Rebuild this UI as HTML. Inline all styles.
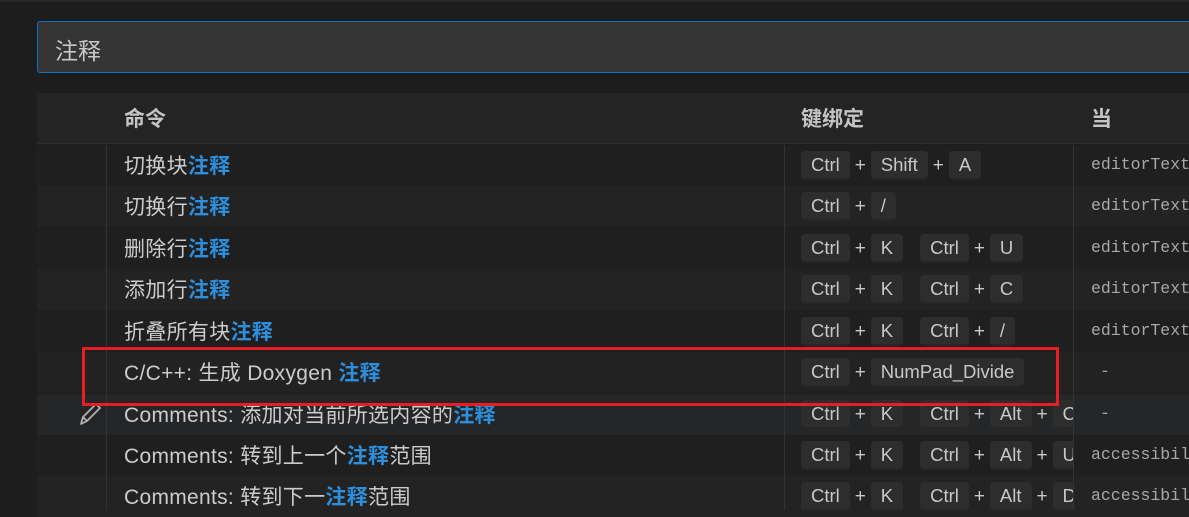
<!DOCTYPE html>
<html><head><meta charset="utf-8"><style>
*{margin:0;padding:0;box-sizing:border-box}
body{width:1189px;height:510px;overflow:hidden;background:#1d1d1d;position:relative;font-family:"Liberation Sans","Noto Sans CJK SC",sans-serif;color:#cccccc}
.topbar{position:absolute;top:0;left:0;width:1189px;height:2px;background:#262626}
.search{position:absolute;left:37px;top:21px;width:1160px;height:52px;background:#353535;border:1px solid #0a74c4;border-radius:3px;font-size:23px;color:#c8c8c8;padding:10px 0 0 17px}
.head{position:absolute;left:37px;top:93px;width:1152px;height:51px;background:#242424;border-bottom:1px solid #303030;font-weight:bold;font-size:21px;color:#c4c4c4}
.head span{position:absolute;top:10px}
.row{position:absolute;left:37px;width:1152px;height:41px;font-size:21px;overflow:hidden}
.row .c{position:absolute;left:87px;top:5px;white-space:nowrap;letter-spacing:0.3px}
.row .k{position:absolute;left:764px;top:6px;display:flex;align-items:center;white-space:nowrap;width:272px;overflow:hidden}
.row .w{position:absolute;left:1054px;top:10px;font-family:"Liberation Mono","DejaVu Sans Mono",monospace;font-size:16.5px;color:#a8a8a8;white-space:nowrap}
.kb{flex-shrink:0;display:inline-block;height:29px;line-height:27px;padding:0 10px;background:#2d2d2d;border-radius:4px;border-bottom:2px solid #262626;font-size:18.5px;color:#c8c8c8}
.p{flex-shrink:0;display:inline-block;width:21px;text-align:center;font-size:19px;color:#c8c8c8}
.g{flex-shrink:0;display:inline-block;width:17px}
b{color:#2d8fdc}
.vl{position:absolute;top:145px;width:1px;height:365px;background:#333}
.red{position:absolute;left:82px;top:347px;width:977px;height:59px;border:3px solid #e81e24}
</style></head><body>
<div class="topbar"></div>
<div class="search">注释</div>
<div class="head"><span style="left:87px">命令</span><span style="left:764px">键绑定</span><span style="left:1054px">当</span></div>

<div class="row" style="top:145px;background:#1f1f1f"><div class="c">切换块<b>注释</b></div><div class="k"><span class="kb">Ctrl</span><span class="p">+</span><span class="kb">Shift</span><span class="p">+</span><span class="kb">A</span></div><div class="w">editorTextFocus</div></div>
<div class="row" style="top:186px;background:#232323"><div class="c">切换行<b>注释</b></div><div class="k"><span class="kb">Ctrl</span><span class="p">+</span><span class="kb">/</span></div><div class="w">editorTextFocus</div></div>
<div class="row" style="top:228px;background:#1f1f1f"><div class="c">删除行<b>注释</b></div><div class="k"><span class="kb">Ctrl</span><span class="p">+</span><span class="kb">K</span><span class="g"></span><span class="kb">Ctrl</span><span class="p">+</span><span class="kb">U</span></div><div class="w">editorTextFocus</div></div>
<div class="row" style="top:269px;background:#232323"><div class="c">添加行<b>注释</b></div><div class="k"><span class="kb">Ctrl</span><span class="p">+</span><span class="kb">K</span><span class="g"></span><span class="kb">Ctrl</span><span class="p">+</span><span class="kb">C</span></div><div class="w">editorTextFocus</div></div>
<div class="row" style="top:311px;background:#1f1f1f"><div class="c">折叠所有块<b>注释</b></div><div class="k"><span class="kb">Ctrl</span><span class="p">+</span><span class="kb">K</span><span class="g"></span><span class="kb">Ctrl</span><span class="p">+</span><span class="kb">/</span></div><div class="w">editorTextFocus</div></div>
<div class="row" style="top:352px;background:#222222"><div class="c">C/C++: 生成 Doxygen <b>注释</b></div><div class="k"><span class="kb">Ctrl</span><span class="p">+</span><span class="kb">NumPad_Divide</span></div><div class="w" style="left:1063px">-</div></div>
<div class="row" style="top:394px;background:#252628"><div class="c">Comments: 添加对当前所选内容的<b>注释</b></div><div class="k"><span class="kb">Ctrl</span><span class="p">+</span><span class="kb">K</span><span class="g"></span><span class="kb">Ctrl</span><span class="p">+</span><span class="kb">Alt</span><span class="p">+</span><span class="kb">C</span></div><div class="w" style="left:1063px">-</div>
<svg style="position:absolute;left:41px;top:7px" width="26" height="26" viewBox="0 0 26 26"><path d="M3 23 L5 16 L18 3 L22 7 L9 20 Z M5 16 L9 20" fill="none" stroke="#b0b0b0" stroke-width="1.8" stroke-linejoin="round"/></svg></div>
<div class="row" style="top:435px;background:#1f1f1f"><div class="c">Comments: 转到上一个<b>注释</b>范围</div><div class="k"><span class="kb">Ctrl</span><span class="p">+</span><span class="kb">K</span><span class="g"></span><span class="kb">Ctrl</span><span class="p">+</span><span class="kb">Alt</span><span class="p">+</span><span class="kb">UpArrow</span></div><div class="w">accessibilityMode</div></div>
<div class="row" style="top:476px;background:#232323"><div class="c">Comments: 转到下一<b>注释</b>范围</div><div class="k"><span class="kb">Ctrl</span><span class="p">+</span><span class="kb">K</span><span class="g"></span><span class="kb">Ctrl</span><span class="p">+</span><span class="kb">Alt</span><span class="p">+</span><span class="kb">DownArrow</span></div><div class="w">accessibilityMode</div></div>

<div class="vl" style="left:106px"></div>
<div class="vl" style="left:784px"></div>
<div class="vl" style="left:1073px"></div>
<div class="red"></div>
</body></html>
